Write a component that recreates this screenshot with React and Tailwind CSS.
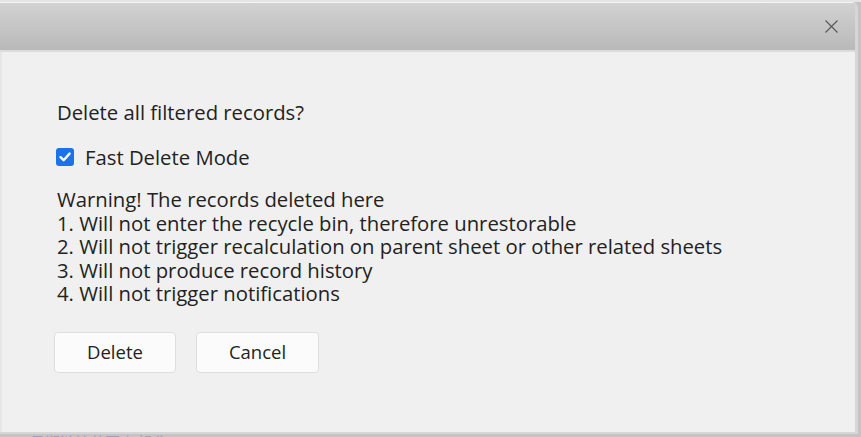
export default function App() {
  const notes = [
    'Warning! The records deleted here',
    '1. Will not enter the recycle bin, therefore unrestorable',
    '2. Will not trigger recalculation on parent sheet or other related sheets',
    '3. Will not produce record history',
    '4. Will not trigger notifications',
  ]

  return (
    <div className="w-[861px] h-[437px] overflow-hidden bg-[#c4c4c4] font-['Open_Sans',sans-serif] text-[#222]">
      <div className="h-[2px] bg-[#e4e4e4]" />
      {/* Dialog */}
      <div className="w-[858px] h-[432px] flex flex-col rounded-tr-[6px] border-t border-r-[3px] border-b-[2px] border-t-[#f4f4f4] border-r-[#d6d6d6] border-b-[#d6d6d6] overflow-hidden">
        <div className="h-[49px] shrink-0 flex items-center justify-end pr-[16px] bg-gradient-to-b from-[#d2d2d2] to-[#b9b9b9] border-b-2 border-[#dcdcdc]">
          <svg width="15" height="15" viewBox="0 0 16 16" className="text-[#555]">
            <path d="M2 2 L14 14 M14 2 L2 14" stroke="currentColor" strokeWidth="1.5" strokeLinecap="round" />
          </svg>
        </div>
        <div className="flex-1 bg-[#f0f0f0] border-l-2 border-[#e6e6e6] pl-[55px] pt-[48px] text-[20.3px] leading-[24px]">
          <p>Delete all filtered records?</p>

          <label className="flex items-center gap-[11px] mt-[21px] -ml-[1px]">
            <span className="w-[18px] h-[18px] rounded-[3px] bg-[#1a73e8] flex items-center justify-center">
              <svg width="14" height="14" viewBox="0 0 14 14">
                <path d="M2.5 7.2 L5.6 10.2 L11.6 3.6" fill="none" stroke="white" strokeWidth="2.4" strokeLinecap="round" strokeLinejoin="round" />
              </svg>
            </span>
            <span>Fast Delete Mode</span>
          </label>

          <div className="mt-[19px] leading-[23.5px]">
            {notes.map((n) => (
              <p key={n}>{n}</p>
            ))}
          </div>

          <div className="flex gap-[20px] mt-[26px] -ml-[3px]">
            <button className="w-[122px] h-[41px] bg-[#fbfbfb] border border-[#dedede] rounded-[4px] text-[18.5px] text-[#222]">
              Delete
            </button>
            <button className="w-[123px] h-[41px] bg-[#fbfbfb] border border-[#dedede] rounded-[4px] text-[18.5px] text-[#222]">
              Cancel
            </button>
          </div>
        </div>
      </div>
      <div className="pl-[30px] -mt-[1px] text-[15px] leading-[18px] text-[#8aa4c8] font-['Noto_Sans_CJK_SC',sans-serif]">
        日期链接范围 与操作
      </div>
    </div>
  )
}
